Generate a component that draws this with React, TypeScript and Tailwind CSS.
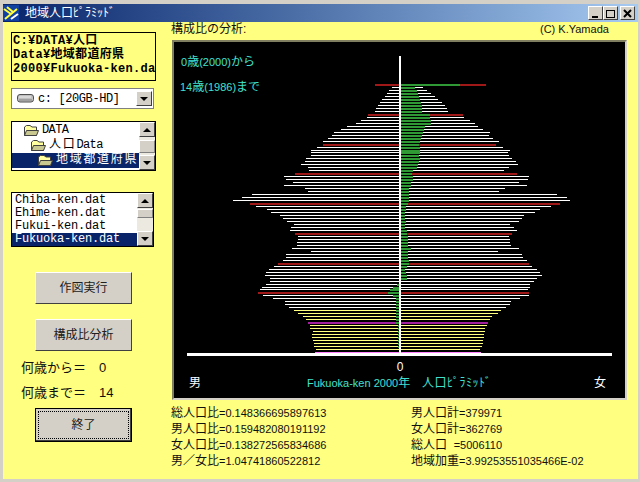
import React from 'react';

const jp = '"Liberation Sans", "Noto Sans CJK JP", sans-serif';
const mono = '"Liberation Mono", "Noto Sans CJK JP", monospace';

// one entry per age, oldest row first
const LEFT = [25,8,11,13,15,18,20,22,24,25,32,33,39,44,53,59,66,68,72,77,77,83,89,89,89,94,95,99,92,91,105,116,114,107,116,95,92,148,158,167,150,144,133,129,120,117,113,106,109,110,105,102,102,103,103,108,89,114,114,117,122,126,131,134,135,130,130,134,138,140,142,137,127,115,115,111,106,102,97,94,92,90,90,87,88,88,87,86,86,84,85];
const RIGHT = [86,23,27,31,35,38,42,45,47,48,63,64,70,75,78,83,90,89,93,99,96,103,110,108,109,112,116,118,109,104,117,129,128,119,127,105,99,157,167,170,160,151,140,135,124,122,119,110,114,117,112,109,110,110,111,119,98,122,123,127,129,132,137,140,142,137,134,130,130,128,129,129,120,111,110,106,101,98,92,90,88,87,85,85,84,84,83,83,82,80,81];
const GREEN_R = [60,15,17,18,19,20,21,22,22,22,30,30,31,31,25,24,23,22,21,20,19,20,20,20,19,20,19,18,17,13,12,13,13,11,11,9,9,9,9,9,8,6,6,5,5,5,6,5,5,7,7,8,8,8,8,11,8,8,8,9,9,7,5,6,7,7,1];
const GREEN_L: Record<number, number> = { 67: 3, 68: 7, 69: 10, 70: 12, 71: 7, 72: 4, 73: 4, 74: 4, 75: 4, 76: 4, 77: 4, 78: 4, 79: 4, 80: 4, 81: 2, 82: 2, 83: 2, 84: 2, 85: 2, 86: 2, 87: 2, 88: 2 };

function barColor(i: number) {
  if (i === 90) return '#ff80ff';
  if (i === 80) return '#a020a0';
  if (i >= 76) return '#ffff80';
  if (i % 10 === 0) return '#a01818';
  return '#ffffff';
}

function Pyramid() {
  return (
    <svg width="451" height="356" viewBox="174 42 451 356" className="block">
      {LEFT.map((l, i) => {
        const y = Math.round(84 + i * 2.978) + 0.5;
        const thick = i % 10 === 0;
        return (
          <g key={i} shapeRendering="crispEdges">
            <line x1={400 - l} x2={400 + RIGHT[i]} y1={y} y2={y} stroke={barColor(i)} strokeWidth={thick ? 2 : 1} />
            {GREEN_R[i] ? <line x1={400} x2={400 + GREEN_R[i]} y1={y} y2={y} stroke="#2f9a35" strokeWidth="2" /> : null}
            {GREEN_L[i] ? <line x1={400 - GREEN_L[i]} x2={400} y1={y} y2={y} stroke="#2f9a35" strokeWidth="2" /> : null}
          </g>
        );
      })}
      <g shapeRendering="crispEdges">
        <line x1="400" x2="400" y1="56" y2="354" stroke="#ffffff" strokeWidth="2" />
        <line x1="187" x2="612" y1="354.5" y2="354.5" stroke="#ffffff" strokeWidth="3" />
      </g>
      <g fontFamily={jp} fontSize="12">
        <text x="181" y="66" fill="#40e0d0"><tspan fontSize="11">0</tspan>歳<tspan fontSize="11">(2000)</tspan>から</text>
        <text x="180" y="91" fill="#40e0d0"><tspan fontSize="11">14</tspan>歳<tspan fontSize="11">(1986)</tspan>まで</text>
        <text x="400" y="371" fill="#ffffff" textAnchor="middle">0</text>
        <text x="189" y="387" fill="#ffffff">男</text>
        <text x="594" y="387" fill="#ffffff">女</text>
        <text x="307" y="387" fill="#40e0d0"><tspan fontSize="11">Fukuoka-ken 2000</tspan>年<tspan x="422" letterSpacing="0.5">人口ﾋﾟﾗﾐｯﾄﾞ</tspan></text>
      </g>
    </svg>
  );
}

function ScrollArrow({ up }: { up?: boolean }) {
  return (
    <div className="flex h-[15px] w-[16px] shrink-0 items-center justify-center border border-t-white border-l-white border-r-[#404040] border-b-[#404040] bg-[#d4d0c8]">
      <div className={`h-0 w-0 border-x-[4px] border-x-transparent ${up ? 'border-b-[4px] border-b-black' : 'border-t-[4px] border-t-black'}`} />
    </div>
  );
}

function ScrollBar({ thumbTop, thumbH }: { thumbTop: number; thumbH: number }) {
  return (
    <div className="flex w-[16px] flex-col justify-between bg-[#ece9e0]">
      <ScrollArrow up />
      <div className="relative flex-1">
        <div style={{ top: thumbTop, height: thumbH }} className="absolute left-0 w-[16px] border border-t-white border-l-white border-r-[#808080] border-b-[#808080] bg-[#d4d0c8]" />
      </div>
      <ScrollArrow />
    </div>
  );
}

function Folder() {
  return (
    <svg width="16" height="13" viewBox="0 0 16 13" className="shrink-0">
      <path d="M1.5 11.5 V3 L3.5 1.5 H7 L9 3 H13.5 V11.5 Z" fill="#ffffa0" stroke="#404040" />
      <path d="M1.5 11.5 L3.5 6.5 H15.5 L13.5 11.5 Z" fill="#c8c890" stroke="#404040" />
    </svg>
  );
}

function DriveIcon() {
  return (
    <svg width="17" height="9" viewBox="0 0 17 9" className="shrink-0">
      <rect x="0.5" y="0.5" width="16" height="7.5" rx="2.5" fill="#c0c0c0" stroke="#505050" />
      <path d="M2 3 H14" stroke="#f0f0f0" />
      <path d="M2 6 H15" stroke="#808080" />
    </svg>
  );
}

function WinButton({ label, focused }: { label: string; focused?: boolean }) {
  if (focused) {
    return (
      <div className="h-[34px] w-[97px] border border-black bg-[#d4d0c8] p-[2px] [box-shadow:inset_-1px_-1px_0_#404040]">
        <div className="flex h-full items-center justify-center border border-dotted border-black text-[12px] text-[#202020]">{label}</div>
      </div>
    );
  }
  return (
    <div className="flex h-[32px] w-[97px] items-center justify-center border border-t-white border-l-white border-r-[#404040] border-b-[#404040] bg-[#d4d0c8] text-[12px] text-[#202020]">
      {label}
    </div>
  );
}

function TreeRow({ indent, selected, children }: { indent: string; selected?: boolean; children: React.ReactNode }) {
  return (
    <div className={`flex h-[15px] items-center whitespace-nowrap text-[12px] leading-[15px] tracking-[-0.6px] ${indent} ${selected ? 'bg-[#0a246a] text-white' : 'text-black'}`} style={{ fontFamily: mono }}>
      <Folder />
      <span className="pl-[3px]">{children}</span>
    </div>
  );
}

function StatLine({ label, value }: { label: string; value: string }) {
  return (
    <div className="h-[16px] whitespace-pre text-[12px] leading-[16px] text-[#101010]">
      {label}<span className="text-[11px]">{value}</span>
    </div>
  );
}

function CaptionButton({ children, gap }: { children: React.ReactNode; gap?: boolean }) {
  return (
    <div className={`flex h-[14px] w-[15px] items-center justify-center border border-t-white border-l-white border-r-[#404040] border-b-[#404040] bg-[#d4d0c8] ${gap ? 'ml-[2px]' : ''}`}>
      <svg width="9" height="9" viewBox="0 0 9 9" shapeRendering="crispEdges">{children}</svg>
    </div>
  );
}

export default function App() {
  return (
    <div className="flex h-[482px] w-[640px] flex-col overflow-hidden border-x-[3px] border-r-[2px] border-t-[4px] border-b-[3px] border-[#d4d0c8] bg-[#ffff80]" style={{ fontFamily: jp }}>
      {/* title bar */}
      <div className="flex h-[18px] shrink-0 items-center bg-gradient-to-r from-[#0a246a] to-[#a6caf0] pr-[3px]">
        <svg width="16" height="16" viewBox="0 0 16 16" className="shrink-0">
          <rect width="16" height="16" fill="#1040a0" />
          <path d="M1 4 L8 9 M4 2 L10 7 M2 14 L14 4" stroke="#ffff40" strokeWidth="2" />
          <path d="M8 14 L15 9" stroke="#ffffff" strokeWidth="2" />
        </svg>
        <span className="ml-[6px] text-[12px] leading-none text-white">地域人口ﾋﾟﾗﾐｯﾄﾞ</span>
        <div className="ml-auto flex">
          <CaptionButton><rect x="1" y="7" width="6" height="2" fill="#000" /></CaptionButton>
          <CaptionButton><path d="M0.5 1.5 H8.5 V8.5 H0.5 Z M0 1 H9" fill="none" stroke="#000" /></CaptionButton>
          <CaptionButton gap><path d="M1 1 L8 8 M8 1 L1 8" stroke="#000" strokeWidth="2" shapeRendering="auto" /></CaptionButton>
        </div>
      </div>

      <div className="flex flex-1">
        {/* left column */}
        <div className="flex w-[169px] shrink-0 flex-col pl-[8px] pt-[10px]">
          <div className="h-[49px] w-[145px] overflow-hidden border border-black pl-[1px] pt-px text-[12px] font-bold leading-[14px] tracking-[0.3px] text-black" style={{ fontFamily: mono }}>
            <div>C:¥DATA¥人口</div>
            <div>Data¥地域都道府県</div>
            <div className="whitespace-nowrap">2000¥Fukuoka-ken.da</div>
          </div>

          <div className="mt-[7px] flex h-[21px] w-[143px] items-center border border-[#808080] bg-white pl-[5px] pr-[1px]">
            <DriveIcon />
            <span className="ml-[4px] flex-1 text-[12px] leading-none tracking-[-0.4px] text-black" style={{ fontFamily: mono }}>c: [20GB-HD]</span>
            <ScrollArrow />
          </div>

          <div className="mt-[12px] flex h-[50px] w-[145px] border border-black bg-white">
            <div className="flex-1 overflow-hidden pt-px">
              <TreeRow indent="pl-[11px]">DATA</TreeRow>
              <TreeRow indent="pl-[18px]"><span className="tracking-[1.7px]">人口</span>Data</TreeRow>
              <TreeRow indent="pl-[25px]" selected><span className="tracking-[1.7px]">地域都道府県</span></TreeRow>
            </div>
            <ScrollBar thumbTop={3} thumbH={13} />
          </div>

          <div className="mt-[21px] flex h-[55px] w-[143px] border border-black bg-white">
            <div className="flex-1 overflow-hidden pt-px text-[12px] leading-[13px] tracking-[-0.2px] text-black" style={{ fontFamily: mono }}>
              {['Chiba-ken.dat', 'Ehime-ken.dat', 'Fukui-ken.dat'].map((f) => (
                <div key={f} className="h-[13px] pl-[3px]">{f}</div>
              ))}
              <div className="h-[13px] bg-[#0a246a] pl-[3px] text-white">Fukuoka-ken.dat</div>
            </div>
            <ScrollBar thumbTop={1} thumbH={9} />
          </div>

          <div className="ml-[24px] mt-[25px] flex flex-col gap-[15px]">
            <WinButton label="作図実行" />
            <WinButton label="構成比分析" />
          </div>

          <div className="ml-[10px] mt-[8px] flex flex-col gap-[8px] text-[13px] leading-[17px] text-[#101010]">
            <div className="flex"><span className="w-[78px]">何歳から＝</span><span>0</span></div>
            <div className="flex"><span className="w-[78px]">何歳まで＝</span><span>14</span></div>
          </div>

          <div className="ml-[24px] mt-[7px]">
            <WinButton label="終了" focused />
          </div>
        </div>

        {/* right column */}
        <div className="flex flex-1 flex-col">
          <div className="-ml-px flex h-[18px] items-start text-[12px] leading-[14px] text-[#101010]">
            <span className="w-[369px]">構成比の分析:</span>
            <span className="text-[11px]">(C) K.Yamada</span>
          </div>
          <div className="h-[360px] w-[455px] border-2 border-t-[#808060] border-l-[#808060] border-r-[#d4d0c8] border-b-[#d4d0c8] bg-black">
            <Pyramid />
          </div>
          <div className="-ml-px mt-[5px] grid w-[420px] grid-cols-[240px_1fr]">
            <div>
              <StatLine label="総人口比" value="=0.148366695897613" />
              <StatLine label="男人口比" value="=0.159482080191192" />
              <StatLine label="女人口比" value="=0.138272565834686" />
              <StatLine label="男／女比" value="=1.04741860522812" />
            </div>
            <div>
              <StatLine label="男人口計" value="=379971" />
              <StatLine label="女人口計" value="=362769" />
              <StatLine label="総人口  " value="=5006110" />
              <StatLine label="地域加重" value="=3.99253551035466E-02" />
            </div>
          </div>
        </div>
      </div>
    </div>
  );
}
